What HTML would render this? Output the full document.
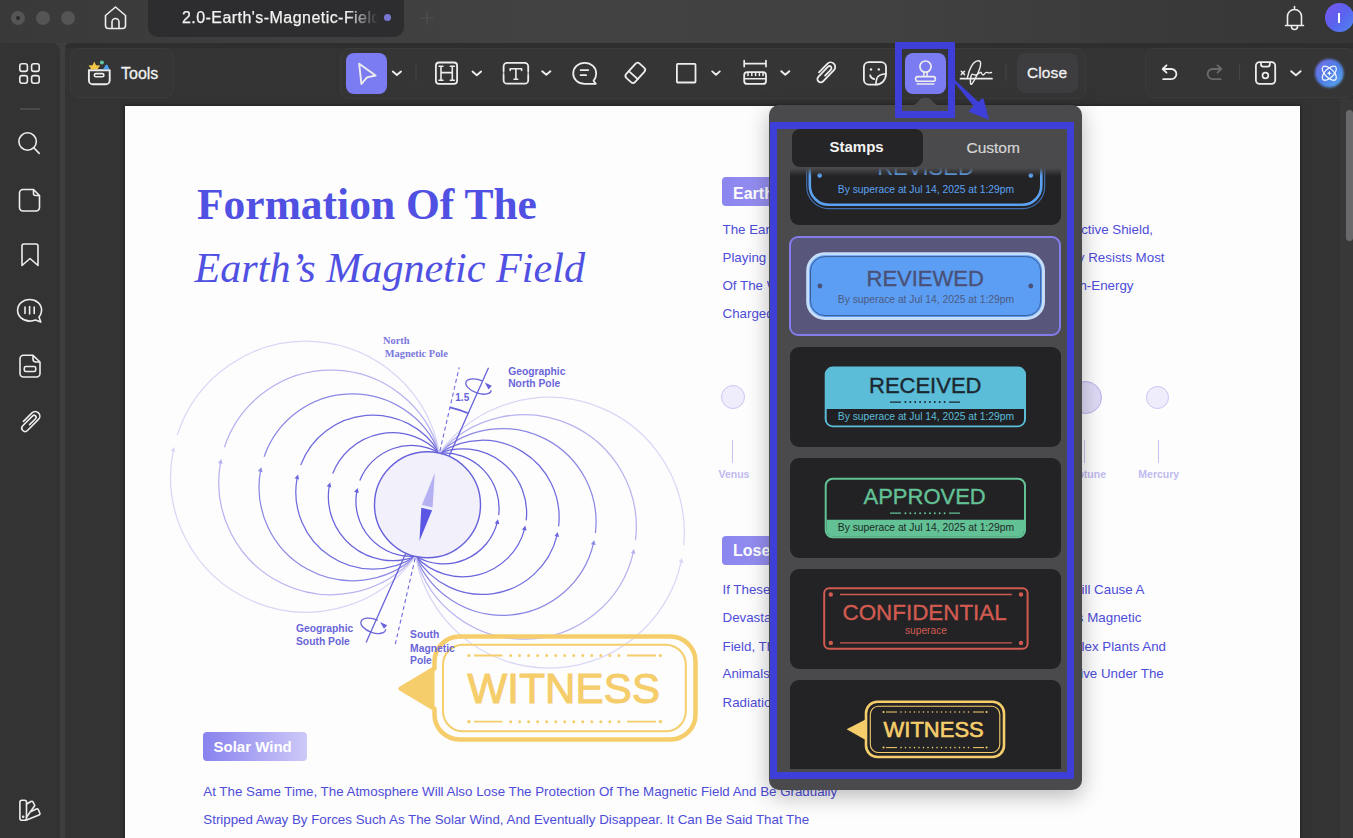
<!DOCTYPE html>
<html><head><meta charset="utf-8">
<style>
*{margin:0;padding:0;box-sizing:border-box}
html,body{width:1353px;height:838px;overflow:hidden;background:#3e3e3e;font-family:"Liberation Sans",sans-serif}
.a{position:absolute}
svg{position:absolute;overflow:visible}
.ic{fill:none;stroke:#ededed;stroke-width:1.6;stroke-linecap:round;stroke-linejoin:round}
.dt{position:absolute;color:#4d4bd6;font-size:13.33px;line-height:16px;white-space:nowrap}
</style></head><body>
<!-- title bar -->
<div class="a" style="left:0;top:0;width:1353px;height:43px;background:linear-gradient(90deg,#393939 0%,#3d3d3d 15%,#424242 40%,#414141 65%,#3a3a3a 85%,#363636 100%)"></div>
<div class="a" style="left:11px;top:11px;width:14px;height:14px;border-radius:50%;background:#555555"></div>
<div class="a" style="left:16px;top:16px;width:4px;height:4px;border-radius:50%;background:#2a2a2a"></div>
<div class="a" style="left:36px;top:11px;width:14px;height:14px;border-radius:50%;background:#555555"></div>
<div class="a" style="left:61px;top:11px;width:14px;height:14px;border-radius:50%;background:#555555"></div>
<svg style="left:103px;top:5px" width="25" height="25" viewBox="0 0 25 25"><path class="ic" d="M2.5 10.5 L12.5 2 L22.5 10.5 V20.5 a3 3 0 0 1 -3 3 H5.5 a3 3 0 0 1 -3 -3 Z M9 23.5 V17 a3.5 3.5 0 0 1 7 0 V23.5"/></svg>
<!-- tab -->
<div class="a" style="left:148px;top:-10px;width:256px;height:47px;border-radius:10px;background:#2d2d2f"></div>
<div class="a" style="left:182px;top:8px;font-size:16px;line-height:19px;color:#f2f2f2;white-space:nowrap;width:196px;overflow:hidden;letter-spacing:0.45px;-webkit-text-stroke:0.25px #f2f2f2;-webkit-mask-image:linear-gradient(90deg,#000 84%,transparent 100%)">2.0-Earth's-Magnetic-Field</div>
<div class="a" style="left:383.5px;top:14px;width:7px;height:7px;border-radius:50%;background:#7a76d6"></div>
<svg style="left:420px;top:11px" width="14" height="14"><path d="M7 0.5V13.5M0.5 7H13.5" stroke="#505052" stroke-width="1.2"/></svg>
<!-- bell -->
<svg style="left:1284px;top:5px" width="21" height="26" viewBox="0 0 21 26"><path class="ic" d="M10.5 1.5v2 M3.5 19.5 V11.5 a7 7 0 0 1 14 0 V19.5 M1.5 20.5 H19.5 M7.5 21.5 a3 3 0 0 0 6 0"/></svg>
<!-- avatar -->
<div class="a" style="left:1325px;top:3px;width:29px;height:29px;border-radius:50%;background:linear-gradient(135deg,#7a55ee 0%,#5a62ee 50%,#4f86f0 100%)"></div>
<div class="a" style="left:1338.3px;top:12.5px;width:1.6px;height:10.5px;background:#fff"></div>

<!-- panels -->
<div class="a" style="left:0;top:43px;width:60px;height:795px;background:#333333;border-top-right-radius:8px"></div>
<div class="a" style="left:65px;top:43px;width:1288px;height:795px;background:#333333;border-top-left-radius:8px"></div>
<div class="a" style="left:65px;top:43px;width:1288px;height:5px;background:#2e2e2e;border-top-left-radius:8px"></div>
<div class="a" style="left:20px;top:108px;width:20px;height:1.5px;background:#4a4a4c"></div>

<!-- document page -->
<div class="a" style="left:125px;top:106px;width:1175px;height:732px;background:#fdfdfe;box-shadow:0 0 3px 1px rgba(0,0,0,0.35)"></div>

<!-- scrollbar -->
<div class="a" style="left:1340px;top:99px;width:13px;height:739px;background:#383838"></div>
<div class="a" style="left:1346px;top:110px;width:7px;height:131px;border-radius:4px;background:#69696b"></div>

<!-- toolbar containers -->
<div class="a" style="left:70px;top:48px;width:104px;height:50px;border-radius:9px;background:#353535;border:1px solid #3b3b3b"></div>
<div class="a" style="left:121px;top:64px;font-size:16px;line-height:19px;color:#f0f0f0;-webkit-text-stroke:0.3px #f0f0f0">Tools</div>
<div class="a" style="left:340px;top:48px;width:746px;height:51px;border-radius:9px;background:#353535;border:1px solid #3b3b3b"></div>
<div class="a" style="left:1145px;top:48px;width:210px;height:50px;border-radius:9px;background:#353535;border:1px solid #3b3b3b"></div>

<div class="a" style="left:346px;top:53px;width:41px;height:41px;border-radius:8px;background:#7c7cf2"></div>
<div class="a" style="left:905px;top:53px;width:41px;height:41px;border-radius:8px;background:#7c7cf2"></div>
<div class="a" style="left:1017px;top:53px;width:61px;height:40px;border-radius:8px;background:#3d3d3f"></div>
<div class="a" style="left:1027px;top:63px;font-size:15.5px;line-height:19px;color:#f0f0f0;-webkit-text-stroke:0.3px #f0f0f0;letter-spacing:0.1px">Close</div>
<!--ICONS--><svg class="a" style="left:0;top:0" width="1353" height="838" viewBox="0 0 1353 838">
<g class="ic">
<!-- sidebar grid -->
<rect x="19.8" y="63.8" width="7.6" height="7.6" rx="2.2"/><rect x="31.6" y="63.8" width="7.6" height="7.6" rx="2.2"/>
<rect x="19.8" y="75.6" width="7.6" height="7.6" rx="2.2"/><rect x="31.6" y="75.6" width="7.6" height="7.6" rx="2.2"/>
<!-- search -->
<circle cx="27.6" cy="141.5" r="8.7"/><path d="M33.8 147.8 L39.2 153.4"/>
<!-- page -->
<path d="M23 189.5 H33.5 L39.5 195.5 V207.5 a3.5 3.5 0 0 1 -3.5 3.5 H23 a3.5 3.5 0 0 1 -3.5 -3.5 V193 a3.5 3.5 0 0 1 3.5 -3.5 Z M33.5 189.5 V193.5 a2 2 0 0 0 2 2 H39.5"/>
<!-- bookmark -->
<path d="M22 246 a2 2 0 0 1 2 -2 H36 a2 2 0 0 1 2 2 V265.5 L30 258.5 L22 265.5 Z"/>
<!-- comment -->
<path d="M29.6 299.5 c6.8 0 12 4.7 12 10.8 c0 2.6 -1 5 -2.6 6.8 l1.8 5 l-5.3 -2 c-1.8 0.7 -3.8 1 -5.9 1 c-6.8 0 -12 -4.8 -12 -10.8 s5.2 -10.8 12 -10.8 Z M25 307 V313.5 M29.6 306.5 V314 M34.2 307 V313.5"/>
<!-- file with box -->
<path d="M23.5 355.3 H33 L40 362 V373.5 a3.5 3.5 0 0 1 -3.5 3.5 H23.5 a3.5 3.5 0 0 1 -3.5 -3.5 V358.8 a3.5 3.5 0 0 1 3.5 -3.5 Z M33 355.3 V359 a3 3 0 0 0 3 3 H40"/>
<rect x="24.3" y="366.5" width="11.4" height="5" rx="1.6"/>
<!-- paperclip side -->
<g transform="translate(23.2 428.2) rotate(-45)"><path d="M5 -4.6 H17 A4.6 4.6 0 0 1 17 4.6 H1.4 A3.3 3.3 0 0 1 1.4 -2 H15.4 A2 2 0 0 1 15.4 2 H7" stroke-width="1.6"/></g>
<!-- palette bottom -->
<rect x="19.9" y="800.3" width="6.6" height="20" rx="2"/>
<path d="M26.6 804 L31 801.5 a1.6 1.6 0 0 1 2.1 0.6 L34.8 805.5 L26.6 817"/>
<path d="M26.6 820 L39 815 a1.5 1.5 0 0 0 0.8 -2 L38.3 809.6 a1.5 1.5 0 0 0 -2 -0.6 L31 811.5"/>
<circle cx="23.2" cy="816.7" r="0.5" fill="#ededed"/>
</g>
</svg>
<!--ICONS2--><svg class="a" style="left:0;top:0" width="1353" height="838" viewBox="0 0 1353 838">
<!-- tools icon -->
<path d="M88.9 70.2 H109.7 V80.5 a3.8 3.8 0 0 1 -3.8 3.8 H92.7 a3.8 3.8 0 0 1 -3.8 -3.8 Z" fill="none" stroke="#ededed" stroke-width="1.9" stroke-linejoin="round"/>
<rect x="94.3" y="73.6" width="9.6" height="3.2" rx="1.6" fill="none" stroke="#ededed" stroke-width="1.6"/>
<path d="M94.3 61.4 L96 65.2 L100.3 65.6 L97.8 68.6 L98.5 69.3 H90.3 L90.9 68.6 L88.5 65.6 L92.6 65.2 Z" fill="#f6c744"/>
<circle cx="101.9" cy="62.4" r="2" fill="#5fc9a6"/>
<path d="M103 69.3 L105.5 65.3 a1.2 1.2 0 0 1 2 0 L109.5 69.3 Z" fill="#4aa2ee"/>
<g class="ic">
<!-- home -->
<!-- select arrow -->
<path d="M359.2 63.8 L375.6 75.5 L367 77.4 L361.4 84 Z" stroke-width="1.9"/>
<path d="M392.8 71.6 L396.9 75 L401 71.6" stroke-width="1.9"/>
<line x1="416" y1="64" x2="416" y2="81" stroke="#48484a" stroke-width="1"/>
<!-- H -->
<rect x="435.9" y="62.5" width="21.2" height="21.4" rx="3.2" stroke-width="1.8"/>
<path d="M441 66.2 V80.3 M452.3 66.2 V80.3 M441 72.6 H452.3 M439 66.2 H443 M450.3 66.2 H454.3 M439 80.3 H443 M450.3 80.3 H454.3" stroke-width="1.6"/>
<path d="M472.5 71.6 L476.8 75.2 L481.1 71.6" stroke-width="1.9"/>
<!-- T -->
<path d="M503.6 71.3 V66.3 a3.5 3.5 0 0 1 3.5 -3.5 H524.7 a3.5 3.5 0 0 1 3.5 3.5 V71.3 M503.6 75 V80.2 a3.5 3.5 0 0 0 3.5 3.5 H524.7 a3.5 3.5 0 0 0 3.5 -3.5 V75" stroke-width="1.8"/>
<circle cx="503.6" cy="73.1" r="0.9" fill="#ededed" stroke="none"/><circle cx="528.2" cy="73.1" r="0.9" fill="#ededed" stroke="none"/>
<path d="M510.2 70.5 V68.8 H521.6 V70.5 M515.9 68.8 V79.2 M514 79.2 H517.8" stroke-width="1.6"/>
<path d="M542.2 71.3 L546.3 74.8 L550.4 71.3" stroke-width="1.9"/>
<!-- comment -->
<path d="M584.7 62.8 c6.6 0 11.5 4.8 11.5 10.8 c0 2.7 -1 5.3 -2.7 7.2 l2.3 3.1 h-11.1 c-6.6 0 -11.5 -4.5 -11.5 -10.3 c0 -6 5 -10.8 11.5 -10.8 Z" stroke-width="1.8"/>
<path d="M580.6 70.1 H588.3 M580.6 75.2 H586.1" stroke-width="1.8"/>
<!-- eraser -->
<g transform="translate(635.3,72.9) rotate(42)"><rect x="-6" y="-9.8" width="12" height="19.6" rx="3" stroke-width="1.8"/><path d="M-6 3 H6" stroke-width="1.8"/></g>
<!-- square -->
<rect x="676.9" y="63.9" width="18.6" height="18.6" rx="0.8" stroke-width="1.8"/>
<path d="M712.2 71.4 L716 74.7 L719.8 71.4" stroke-width="1.9"/>
<!-- ruler -->
<path d="M744.2 63.6 H766 M744.2 60.6 V66.6 M766 60.6 V66.6" stroke-width="1.7"/>
<rect x="744.2" y="72.2" width="21.8" height="11.7" rx="3" stroke-width="1.8"/>
<path d="M748 72.5 V75.4 M751.8 72.5 V75.4 M755.6 72.5 V75.4 M759.4 72.5 V75.4 M763 72.5 V75.4 M744.5 78.8 H765.8" stroke-width="1.5"/>
<path d="M781.3 71.2 L785.3 74.8 L789.3 71.2" stroke-width="1.9"/>
<!-- paperclip -->
<g transform="translate(818.8 79.2) rotate(-46)"><path d="M5 -4.6 H17 A4.6 4.6 0 0 1 17 4.6 H1.4 A3.3 3.3 0 0 1 1.4 -2 H15.4 A2 2 0 0 1 15.4 2 H7" stroke-width="1.8"/></g>
<!-- sticker -->
<path d="M886 73.8 V67 a4.9 4.9 0 0 0 -4.9 -4.9 H868.8 a4.9 4.9 0 0 0 -4.9 4.9 V79.7 a4.9 4.9 0 0 0 4.9 4.9 H875.7 C881.5 84.6 886 80 886 73.8 Z" stroke-width="1.8"/>
<path d="M886 73.8 C882 74.2 878.3 75.3 877.2 77.8 C876.3 80 876.1 82 875.7 84.6" stroke-width="1.6"/>
<circle cx="871" cy="69.4" r="1.2" fill="#ededed" stroke="none"/><circle cx="878.8" cy="69.4" r="1.2" fill="#ededed" stroke="none"/>
<path d="M870.1 75.2 c0.5 2 2.1 3.5 4.3 3.9" stroke-width="1.7"/>
<!-- stamp -->
<circle cx="925.5" cy="66.6" r="5.6" stroke-width="1.7"/>
<path d="M923.9 72.3 V76 M927.1 72.3 V76" stroke-width="1.5"/>
<rect x="915.6" y="76.6" width="19.8" height="4.6" rx="2.3" stroke-width="1.6"/>
<path d="M917.2 84 H933.8" stroke-width="1.6"/>
<!-- signature -->
<path d="M961.3 71.2 L964.5 74.6 M964.5 71.2 L961.3 74.6" stroke-width="1.5"/>
<path d="M960.5 78.7 H992" stroke-width="1.7"/>
<path d="M967.5 77.3 C969 69 973 61 978.5 60.8 C981.5 60.7 981 65.5 979 70.5 C976 78 971.5 85.5 970.8 84.2 C970 82.5 970.5 72 973.5 74.5 C976 76.5 979 73 980.5 72.3 C981.5 71.8 981.5 75 983 75 C984.5 75 985 72.2 986.5 72.4 C988 72.6 988.5 73.5 991.5 72.5" stroke-width="1.4"/>
<line x1="1006" y1="65" x2="1006" y2="80.5" stroke="#48484a" stroke-width="1"/>
<!-- undo -->
<path d="M1163 69 H1171.3 a5.1 5.1 0 0 1 0 10.2 H1163.2 M1166.5 65.3 L1162.7 69 L1166.5 72.7" stroke-width="1.8"/>
<path d="M1221 69 H1212.7 a5.1 5.1 0 0 0 0 10.2 H1220.8 M1217.5 65.3 L1221.3 69 L1217.5 72.7" stroke="#6a6a6c" stroke-width="1.8"/>
<line x1="1239.6" y1="65" x2="1239.6" y2="79.5" stroke="#48484a" stroke-width="1"/>
<!-- save -->
<path d="M1259.5 62.2 H1271.6 a3.6 3.6 0 0 1 3.6 3.6 V80.3 a3.6 3.6 0 0 1 -3.6 3.6 H1259.5 a3.6 3.6 0 0 1 -3.6 -3.6 V65.8 a3.6 3.6 0 0 1 3.6 -3.6 Z M1261 62.5 V64.6 a2 2 0 0 0 2 2 H1267.8 a2 2 0 0 0 2 -2 V62.5" stroke-width="1.8"/>
<circle cx="1265.4" cy="75.5" r="2.9" stroke-width="1.7"/>
<path d="M1291.2 71.2 L1295.9 75.2 L1300.6 71.2" stroke-width="1.9"/>
</g>
<!-- AI logo -->
<defs><linearGradient id="aig" x1="0" y1="0" x2="1" y2="1"><stop offset="0" stop-color="#7a6ee8"/><stop offset="0.5" stop-color="#4f7ee8"/><stop offset="1" stop-color="#5ab0ee"/></linearGradient>
<filter id="blr"><feGaussianBlur stdDeviation="0.9"/></filter></defs>
<circle cx="1329.3" cy="73.2" r="14.3" fill="url(#aig)" filter="url(#blr)"/>
<g fill="none" stroke="#f2f4ff" stroke-width="1.3" stroke-linecap="round">
<ellipse cx="1329.3" cy="73.2" rx="9" ry="4.3" transform="rotate(45 1329.3 73.2)"/>
<ellipse cx="1329.3" cy="73.2" rx="9" ry="4.3" transform="rotate(-45 1329.3 73.2)"/>
</g>
<path d="M1329.3 70.6 L1330.1 72.4 L1331.9 73.2 L1330.1 74 L1329.3 75.8 L1328.5 74 L1326.7 73.2 L1328.5 72.4 Z" fill="#fff"/>
</svg>
<!--ICONS3-->
<!--DOC--><svg class="a" style="left:0;top:0" width="1353" height="838" viewBox="0 0 1353 838">
<g fill="none" stroke-width="1.25">
<path d="M439.4 453.1 A55.5 55.5 0 0 0 359.8 480.5 M356.8 491.1 A55.5 55.5 0 0 0 415.6 556.3" stroke="#6661da"/>
<path d="M439.4 453.1 A64.1 64.1 0 0 0 332.7 473.5 M329.3 485.5 A64.1 64.1 0 0 0 415.6 556.3" stroke="#6a65dc"/>
<path d="M439.4 453.1 A77.1 77.1 0 0 0 300.7 465.1 M297.2 477.6 A77.1 77.1 0 0 0 415.6 556.3" stroke="#706bde"/>
<path d="M439.4 453.1 A93.5 93.5 0 0 0 264.1 456.8 M260.6 470.3 A93.5 93.5 0 0 0 415.6 556.3" stroke="#8c88e4"/>
<path d="M439.4 453.1 A112.3 112.3 0 0 0 224.4 447.2 M220.6 462.2 A112.3 112.3 0 0 0 415.6 556.3" stroke="#b6b3ee"/>
<path d="M439.4 453.1 A135.4 135.4 0 0 0 177.2 435.1 M173.3 450.1 A135.4 135.4 0 0 0 415.6 556.3" stroke="#d9d7f5"/>
<path d="M439.4 453.1 A55.5 55.5 0 0 1 498.7 515.1 M497.3 522.4 A55.5 55.5 0 0 1 415.6 556.3" stroke="#6661da"/>
<path d="M439.4 453.1 A64.1 64.1 0 0 1 526.2 520.4 M524.6 528.8 A64.1 64.1 0 0 1 415.6 556.3" stroke="#6a65dc"/>
<path d="M439.4 453.1 A77.1 77.1 0 0 1 558.6 526.3 M557.1 535.2 A77.1 77.1 0 0 1 415.6 556.3" stroke="#706bde"/>
<path d="M439.4 453.1 A93.5 93.5 0 0 1 595.4 533.0 M593.5 543.3 A93.5 93.5 0 0 1 415.6 556.3" stroke="#8c88e4"/>
<path d="M439.4 453.1 A112.3 112.3 0 0 1 635.5 540.3 M633.4 552.1 A112.3 112.3 0 0 1 415.6 556.3" stroke="#b6b3ee"/>
<path d="M439.4 453.1 A135.4 135.4 0 0 1 683.7 545.3 M681.3 561.1 A135.4 135.4 0 0 1 415.6 556.3" stroke="#d9d7f5"/>
</g>
<path d="M357.7 488.0 L358.7 493.1 L354.1 491.7 Z" fill="#6661da"/>
<path d="M330.2 482.4 L331.3 487.5 L326.6 486.2 Z" fill="#6a65dc"/>
<path d="M298.1 474.5 L299.1 479.6 L294.5 478.3 Z" fill="#706bde"/>
<path d="M261.4 467.2 L262.5 472.3 L257.9 471.0 Z" fill="#8c88e4"/>
<path d="M221.4 459.0 L222.6 464.1 L217.9 462.9 Z" fill="#b6b3ee"/>
<path d="M174.1 447.0 L175.3 452.0 L170.7 450.8 Z" fill="#d9d7f5"/>
<path d="M497.9 519.3 L499.4 524.2 L494.7 523.3 Z" fill="#6661da"/>
<path d="M525.2 525.6 L526.7 530.6 L522.0 529.7 Z" fill="#6a65dc"/>
<path d="M557.6 532.0 L559.2 536.9 L554.5 536.1 Z" fill="#706bde"/>
<path d="M594.1 540.2 L595.7 545.1 L590.9 544.3 Z" fill="#8c88e4"/>
<path d="M634.0 549.0 L635.5 553.9 L630.8 553.1 Z" fill="#b6b3ee"/>
<path d="M681.8 557.9 L683.5 562.9 L678.7 562.1 Z" fill="#d9d7f5"/>
<circle cx="427.5" cy="504.7" r="53" fill="#f1f0fb" stroke="#6661da" stroke-width="1.4"/>
<path d="M449.1 456.3 L488.5 367.7 M405.9 553.1 L366.1 642.6" stroke="#6762da" stroke-width="1.3"/>
<path d="M439.9 451.1 L459.2 367.3 M415.1 558.3 L395.1 645.0" stroke="#6f6add" stroke-width="1.1" stroke-dasharray="4 3"/>
<path d="M450.0 407.3 A100 100 0 0 1 468.2 413.3" stroke="#6762da" stroke-width="1.8"/>
</svg><svg class="a" style="left:0;top:0" width="1353" height="838" viewBox="0 0 1353 838">
<!-- compass needle -->
<path d="M434.8 473 L421.9 505.1 L432.6 507.5 Z" fill="#b4b0f2"/>
<path d="M419.5 540.7 L421.3 507.8 L432.1 510.2 Z" fill="#5a55e2"/>
<!-- rotation ellipses -->
<path d="M482.9 381.2 A13.3 6.6 20 1 0 491.2 390.1" fill="none" stroke="#6a65d8" stroke-width="1.3"/>
<path d="M484.7 382.6 L491.8 385.8 L488.6 389.4 Z" fill="#6762da"/>
<path d="M377.7 620.4 A13 6.7 20 1 0 385.7 629.3" fill="none" stroke="#6a65d8" stroke-width="1.3"/>
<path d="M380.1 621.9 L387.2 625.2 L384.0 628.8 Z" fill="#6762da"/>
<!-- big witness stamp -->
<g fill="none" stroke="#f5cd6b">
<path d="M460 636.6 H670.5 a25 25 0 0 1 25 25 V714.5 a25 25 0 0 1 -25 25 H459.5 a25 25 0 0 1 -25 -25 V708.8 L400.6 688.6 L434.5 668.5 V661.6 a25 25 0 0 1 25 -25 Z" stroke-width="4.5" stroke-linejoin="round"/>
<rect x="443" y="644.7" width="242.8" height="86.6" rx="20" stroke-width="2"/>
<path d="M474 655.5 H502.5 M627 655.5 H656 M474 721.7 H502.5 M627 721.7 H656" stroke-width="1.8"/>
<path d="M510.6 655.5 H619 M510.6 721.7 H619" stroke-width="3" stroke-dasharray="0 9.02" stroke-linecap="round"/>
<path d="M468.8 655.5 H469 M660.3 655.5 H660.5 M468.8 721.7 H469 M660.3 721.7 H660.5" stroke-width="3.2" stroke-linecap="round"/>
</g>
<path d="M434.5 668.5 L400.6 688.6 L434.5 708.8 Z" fill="#f5cd6b"/>
</svg>
<div class="a" style="left:467.5px;top:664.5px;font-size:42px;line-height:48px;color:#f5cd6b;-webkit-text-stroke:1.1px #f5cd6b;letter-spacing:0.2px">WITNESS</div>
<div class="a" style="left:197.0px;top:178.3px;font-size:43.5px;line-height:52px;font-family:'Liberation Serif',serif;white-space:nowrap;font-weight:bold;color:#5050e2;">Formation Of The</div>
<div class="a" style="left:194.5px;top:241.6px;font-size:42.2px;line-height:51px;font-family:'Liberation Serif',serif;white-space:nowrap;font-style:italic;color:#5050e2;">Earth’s Magnetic Field</div>
<div class="a" style="left:721.5px;top:177.2px;width:200px;height:29px;border-radius:4px;background:linear-gradient(90deg,#8b85ef,#b9b5f5)"></div>
<div class="a" style="left:733.0px;top:183.6px;font-size:16px;line-height:19px;font-family:'Liberation Sans',sans-serif;white-space:nowrap;font-weight:bold;color:#fff;">Earth’s Magnetic Field</div>
<div class="a" style="left:722.5px;top:221.7px;font-size:13.33px;line-height:16px;font-family:'Liberation Sans',sans-serif;white-space:nowrap;color:#4e4cd8;">The Earth’s Magnetic Field Is Like A Protective Shield,</div>
<div class="a" style="left:722.5px;top:249.8px;font-size:13.33px;line-height:16px;font-family:'Liberation Sans',sans-serif;white-space:nowrap;color:#4e4cd8;">Playing An Important Role</div>
<div class="a" style="left:722.5px;top:277.9px;font-size:13.33px;line-height:16px;font-family:'Liberation Sans',sans-serif;white-space:nowrap;color:#4e4cd8;">Of The World</div>
<div class="a" style="left:722.5px;top:306.3px;font-size:13.33px;line-height:16px;font-family:'Liberation Sans',sans-serif;white-space:nowrap;color:#4e4cd8;">Charged Particles</div>
<div class="a" style="right:200.0px;top:221.7px;font-size:13.33px;line-height:16px;font-family:'Liberation Sans',sans-serif;white-space:nowrap;color:#4e4cd8;">A Protective Shield,</div>
<div class="a" style="right:188.5px;top:249.6px;font-size:13.33px;line-height:16px;font-family:'Liberation Sans',sans-serif;white-space:nowrap;color:#4e4cd8;">Effectively Resists Most</div>
<div class="a" style="right:219.5px;top:277.6px;font-size:13.33px;line-height:16px;font-family:'Liberation Sans',sans-serif;white-space:nowrap;color:#4e4cd8;">High-Energy</div>
<div class="a" style="left:721.5px;top:535.5px;width:200px;height:29.8px;border-radius:4px;background:linear-gradient(90deg,#8b85ef,#b9b5f5)"></div>
<div class="a" style="left:733.0px;top:541.3px;font-size:16px;line-height:19px;font-family:'Liberation Sans',sans-serif;white-space:nowrap;font-weight:bold;color:#fff;">Lose The Magnetic Field</div>
<div class="a" style="left:722.5px;top:581.6px;font-size:13.33px;line-height:16px;font-family:'Liberation Sans',sans-serif;white-space:nowrap;color:#4e4cd8;">If These Were To Happen</div>
<div class="a" style="left:722.5px;top:610.2px;font-size:13.33px;line-height:16px;font-family:'Liberation Sans',sans-serif;white-space:nowrap;color:#4e4cd8;">Devastating</div>
<div class="a" style="left:722.5px;top:638.9px;font-size:13.33px;line-height:16px;font-family:'Liberation Sans',sans-serif;white-space:nowrap;color:#4e4cd8;">Field, The</div>
<div class="a" style="left:722.5px;top:666.2px;font-size:13.33px;line-height:16px;font-family:'Liberation Sans',sans-serif;white-space:nowrap;color:#4e4cd8;">Animals</div>
<div class="a" style="left:722.5px;top:694.8px;font-size:13.33px;line-height:16px;font-family:'Liberation Sans',sans-serif;white-space:nowrap;color:#4e4cd8;">Radiation</div>
<div class="a" style="right:208.5px;top:581.6px;font-size:13.33px;line-height:16px;font-family:'Liberation Sans',sans-serif;white-space:nowrap;color:#4e4cd8;">It Will Cause A</div>
<div class="a" style="right:211.7px;top:610.2px;font-size:13.33px;line-height:16px;font-family:'Liberation Sans',sans-serif;white-space:nowrap;color:#4e4cd8;">Earth’s Magnetic</div>
<div class="a" style="right:187.0px;top:638.9px;font-size:13.33px;line-height:16px;font-family:'Liberation Sans',sans-serif;white-space:nowrap;color:#4e4cd8;">Complex Plants And</div>
<div class="a" style="right:189.3px;top:666.2px;font-size:13.33px;line-height:16px;font-family:'Liberation Sans',sans-serif;white-space:nowrap;color:#4e4cd8;">To Survive Under The</div>
<div class="a" style="left:721.4px;top:385px;width:24px;height:24px;border-radius:50%;background:#efedfb;border:1.2px solid #c9c5f1"></div>
<div class="a" style="left:732px;top:440px;width:1.3px;height:22.5px;background:#c6c2f0"></div>
<div class="a" style="left:1068.8px;top:380.7px;width:33px;height:33px;border-radius:50%;background:#dedaf6;border:1.6px solid #b5afeb"></div>
<div class="a" style="left:1084px;top:440px;width:1.3px;height:22.5px;background:#c6c2f0"></div>
<div class="a" style="left:1145.9px;top:385.5px;width:23.4px;height:23.4px;border-radius:50%;background:#efedfb;border:1.2px solid #c9c5f1"></div>
<div class="a" style="left:1158.2px;top:440px;width:1.3px;height:22.5px;background:#c6c2f0"></div>
<div class="a" style="left:718.5px;top:468.1px;font-size:10.5px;line-height:13px;font-family:'Liberation Sans',sans-serif;white-space:nowrap;font-weight:bold;color:#bfbaee;">Venus</div>
<div class="a" style="right:247.0px;top:468.0px;font-size:10.5px;line-height:13px;font-family:'Liberation Sans',sans-serif;white-space:nowrap;font-weight:bold;color:#bfbaee;">Neptune</div>
<div class="a" style="left:1138.3px;top:468.0px;font-size:10.5px;line-height:13px;font-family:'Liberation Sans',sans-serif;white-space:nowrap;font-weight:bold;color:#bfbaee;">Mercury</div>
<div class="a" style="left:383.0px;top:335.2px;font-size:10.4px;line-height:12px;font-family:'Liberation Serif',serif;white-space:nowrap;font-weight:bold;color:#7b77dc;">North</div>
<div class="a" style="left:384.7px;top:348.3px;font-size:10.4px;line-height:12px;font-family:'Liberation Serif',serif;white-space:nowrap;font-weight:bold;color:#7b77dc;">Magnetic Pole</div>
<div class="a" style="left:508.2px;top:366.2px;font-size:10.3px;line-height:12px;font-family:'Liberation Sans',sans-serif;white-space:nowrap;font-weight:bold;color:#6a65d8;">Geographic</div>
<div class="a" style="left:508.2px;top:378.3px;font-size:10.3px;line-height:12px;font-family:'Liberation Sans',sans-serif;white-space:nowrap;font-weight:bold;color:#6a65d8;">North Pole</div>
<div class="a" style="left:296.0px;top:622.7px;font-size:10.3px;line-height:12px;font-family:'Liberation Sans',sans-serif;white-space:nowrap;font-weight:bold;color:#6a65d8;">Geographic</div>
<div class="a" style="left:296.0px;top:635.6px;font-size:10.3px;line-height:12px;font-family:'Liberation Sans',sans-serif;white-space:nowrap;font-weight:bold;color:#6a65d8;">South Pole</div>
<div class="a" style="left:410.1px;top:629.1px;font-size:10.3px;line-height:12px;font-family:'Liberation Sans',sans-serif;white-space:nowrap;font-weight:bold;color:#6a65d8;">South</div>
<div class="a" style="left:410.1px;top:642.7px;font-size:10.3px;line-height:12px;font-family:'Liberation Sans',sans-serif;white-space:nowrap;font-weight:bold;color:#6a65d8;">Magnetic</div>
<div class="a" style="left:410.1px;top:655.4px;font-size:10.3px;line-height:12px;font-family:'Liberation Sans',sans-serif;white-space:nowrap;font-weight:bold;color:#6a65d8;">Pole</div>
<div class="a" style="left:455.3px;top:392.1px;font-size:10px;line-height:12px;font-family:'Liberation Sans',sans-serif;white-space:nowrap;font-weight:bold;color:#6762da;">1.5</div>
<div class="a" style="left:202.6px;top:731.5px;width:104.2px;height:29.7px;border-radius:4px;background:linear-gradient(90deg,#8882ee,#cdc9f8)"></div>
<div class="a" style="left:213.5px;top:738.3px;font-size:15px;line-height:18px;font-family:'Liberation Sans',sans-serif;white-space:nowrap;font-weight:bold;color:#fff;">Solar Wind</div>
<div class="a" style="left:203.3px;top:783.7px;font-size:13.33px;line-height:16px;font-family:'Liberation Sans',sans-serif;white-space:nowrap;color:#4e4cd8;">At The Same Time, The Atmosphere Will Also Lose The Protection Of The Magnetic Field And Be Gradually</div>
<div class="a" style="left:203.3px;top:812.4px;font-size:13.33px;line-height:16px;font-family:'Liberation Sans',sans-serif;white-space:nowrap;color:#4e4cd8;">Stripped Away By Forces Such As The Solar Wind, And Eventually Disappear. It Can Be Said That The</div><!--DOC2-->
<!--POPOVER--><div class="a" style="left:768.5px;top:105.4px;width:313px;height:684.8px;border-radius:10px;background:#4a4a4c;box-shadow:0 6px 22px rgba(0,0,0,0.28)"></div>
<svg class="a" style="left:0;top:0" width="1353" height="838"><path d="M907 106 C914 106 916 104 919.5 100 C922.5 96.6 928.5 96.6 931.5 100 C935 104 937 106 944 106 Z" fill="#4a4a4c"/></svg>
<div class="a" style="left:777px;top:129px;width:290px;height:640px;overflow:hidden">
<div class="a" style="left:13px;top:-3.799999999999997px;width:270.8px;height:99.6px;border-radius:9px;background:#232325"></div>
<div class="a" style="left:12.200000000000045px;top:106.9px;width:272.1px;height:100.3px;border-radius:9px;background:#58577b;border:2px solid #837cea"></div>
<div class="a" style="left:13px;top:218.2px;width:270.8px;height:99.6px;border-radius:9px;background:#232325"></div>
<div class="a" style="left:13px;top:329.3px;width:270.8px;height:99.6px;border-radius:9px;background:#232325"></div>
<div class="a" style="left:13px;top:440.20000000000005px;width:270.8px;height:99.6px;border-radius:9px;background:#232325"></div>
<div class="a" style="left:13px;top:550.8px;width:270.8px;height:99.6px;border-radius:9px;background:#232325"></div>
</div>
<svg class="a" style="left:0;top:0" width="1353" height="838" viewBox="0 0 1353 838">
<rect x="806.7" y="141" width="238" height="67.6" rx="22" fill="none" stroke="#3f6fb0" stroke-width="1.2"/>
<rect x="809.8" y="144.2" width="231.5" height="60.6" rx="19" fill="none" stroke="#5ca2f2" stroke-width="2.6"/>
<circle cx="819.7" cy="175.5" r="2.3" fill="#5ca2f2"/><circle cx="1030.8" cy="175.5" r="2.3" fill="#5ca2f2"/>
<rect x="807.7" y="253.8" width="235.8" height="64.6" rx="17" fill="#5c9ef3" stroke="#c6ddfa" stroke-width="3"/>
<rect x="810.5" y="256.6" width="230.2" height="59" rx="14.5" fill="none" stroke="#3b5d98" stroke-width="1"/>
<circle cx="819.9" cy="286" r="2.4" fill="#4a5178"/><circle cx="1030.8" cy="286" r="2.4" fill="#4a5178"/>
<rect x="825.7" y="367.6" width="199.3" height="58.6" rx="7" fill="#5bbdd7" stroke="#5bbdd7" stroke-width="2"/>
<path d="M826.7 409 H1024 V419.5 a6 6 0 0 1 -6 6 H832.7 a6 6 0 0 1 -6 -6 Z" fill="#202024"/>
<path d="M890 402.1 H901 M949 402.1 H960" stroke="#1b2730" stroke-width="1.2"/><path d="M905.4 402.1 H945" stroke="#1b2730" stroke-width="2" stroke-dasharray="0 4.9" stroke-linecap="round"/>
<rect x="825.7" y="478.7" width="199.3" height="58.6" rx="7" fill="#222224" stroke="#63c196" stroke-width="2"/>
<path d="M826.7 519.8 H1024 V530.5 a6 6 0 0 1 -6 6 H832.7 a6 6 0 0 1 -6 -6 Z" fill="#63c196"/>
<path d="M890 513.2 H901 M949 513.2 H960" stroke="#63c196" stroke-width="1.2"/><path d="M905.4 513.2 H945" stroke="#63c196" stroke-width="2" stroke-dasharray="0 4.9" stroke-linecap="round"/>
<rect x="824.2" y="588.3" width="203.4" height="60.5" rx="5" fill="none" stroke="#d25b51" stroke-width="2"/>
<path d="M840 594.5 H1011.8 M840 642.9 H1011.8" stroke="#d25b51" stroke-width="1.3"/>
<circle cx="830.8" cy="594.5" r="2.2" fill="#d25b51"/>
<circle cx="1021" cy="594.5" r="2.2" fill="#d25b51"/>
<circle cx="830.8" cy="642.9" r="2.2" fill="#d25b51"/>
<circle cx="1021" cy="642.9" r="2.2" fill="#d25b51"/>
<g fill="none" stroke="#f5cd6b">
<rect x="866" y="701.8" width="138" height="55.2" rx="11.5" stroke-width="2.6"/>
<rect x="870.3" y="706.3" width="129.5" height="46.2" rx="8" stroke-width="1.1"/>
<path d="M886 712 H897 M973 712 H984 M886 747.6 H897 M973 747.6 H984" stroke-width="1"/>
<path d="M901 712 H969 M901 747.6 H969" stroke-width="1.6" stroke-dasharray="0 4.5" stroke-linecap="round"/>
<path d="M883.5 712 H883.6 M986.5 712 H986.6 M883.5 747.6 H883.6 M986.5 747.6 H986.6" stroke-width="2" stroke-linecap="round"/>
</g>
<path d="M867 718.8 L846.6 729.3 L867 740.7 Z" fill="#f5cd6b"/>
</svg>
<div class="a" style="left:775.5px;width:300px;text-align:center;top:155.4px;font-size:22px;line-height:26px;white-space:nowrap;color:#5ca2f2;">REVISED</div>
<div class="a" style="left:837.8px;top:184.0px;font-size:10.3px;line-height:12px;white-space:nowrap;color:#5ca2f2;">By superace at Jul 14, 2025 at 1:29pm</div>
<div class="a" style="left:866.5px;top:266.1px;font-size:22px;line-height:26px;white-space:nowrap;color:#4a5178;-webkit-text-stroke:0.35px #4a5178;">REVIEWED</div>
<div class="a" style="left:837.8px;top:294.3px;font-size:10.3px;line-height:12px;white-space:nowrap;color:#4d5a82;">By superace at Jul 14, 2025 at 1:29pm</div>
<div class="a" style="left:869.0px;top:372.8px;font-size:22px;line-height:26px;white-space:nowrap;color:#1b2730;-webkit-text-stroke:0.35px #1b2730;">RECEIVED</div>
<div class="a" style="left:837.8px;top:411.4px;font-size:10.3px;line-height:12px;white-space:nowrap;color:#5bbdd7;">By superace at Jul 14, 2025 at 1:29pm</div>
<div class="a" style="left:863.5px;top:483.9px;font-size:22px;line-height:26px;white-space:nowrap;color:#63c196;-webkit-text-stroke:0.35px #63c196;">APPROVED</div>
<div class="a" style="left:837.8px;top:522.2px;font-size:10.3px;line-height:12px;white-space:nowrap;color:#1c2a24;">By superace at Jul 14, 2025 at 1:29pm</div>
<div class="a" style="left:842.5px;top:599.1px;font-size:22.4px;line-height:27px;white-space:nowrap;color:#d25b51;-webkit-text-stroke:0.35px #d25b51;">CONFIDENTIAL</div>
<div class="a" style="left:905.0px;top:624.6px;font-size:10.2px;line-height:12px;white-space:nowrap;color:#d25b51;">superace</div>
<div class="a" style="left:883.5px;top:717.2px;font-size:22px;line-height:26px;white-space:nowrap;color:#f5cd6b;-webkit-text-stroke:0.6px #f5cd6b;">WITNESS</div>
<div class="a" style="left:777px;top:129px;width:290px;height:39px;background:#4a4a4c"></div>
<div class="a" style="left:777px;top:168px;width:290px;height:8px;background:linear-gradient(#4a4a4c,rgba(74,74,76,0))"></div>
<div class="a" style="left:792px;top:128.7px;width:130.7px;height:38.1px;border-radius:8px;background:#252527"></div>
<div class="a" style="left:829.5px;top:138.4px;font-size:15px;line-height:18px;white-space:nowrap;font-weight:bold;color:#f4f4f4;">Stamps</div>
<div class="a" style="left:966.5px;top:137.7px;font-size:15.5px;line-height:19px;white-space:nowrap;color:#d6d6d6;-webkit-text-stroke:0.2px #d6d6d6;">Custom</div>
<div class="a" style="left:770px;top:122px;width:304px;height:656.5px;border:7px solid #3e3ed8"></div>
<div class="a" style="left:894.6px;top:41.8px;width:60.2px;height:76.2px;border:7px solid #3e3ed8"></div>
<svg class="a" style="left:0;top:0" width="1353" height="838"><path d="M954.9 80.2 L978.2 101.9 L983 98.3 L988.7 119.4 L969 111.5 L973.8 106.1 L953.7 81.2 Z" fill="#3e3ed8" stroke="#3e3ed8" stroke-width="0.6" stroke-linejoin="round"/></svg><!--POP2-->
</body></html>
